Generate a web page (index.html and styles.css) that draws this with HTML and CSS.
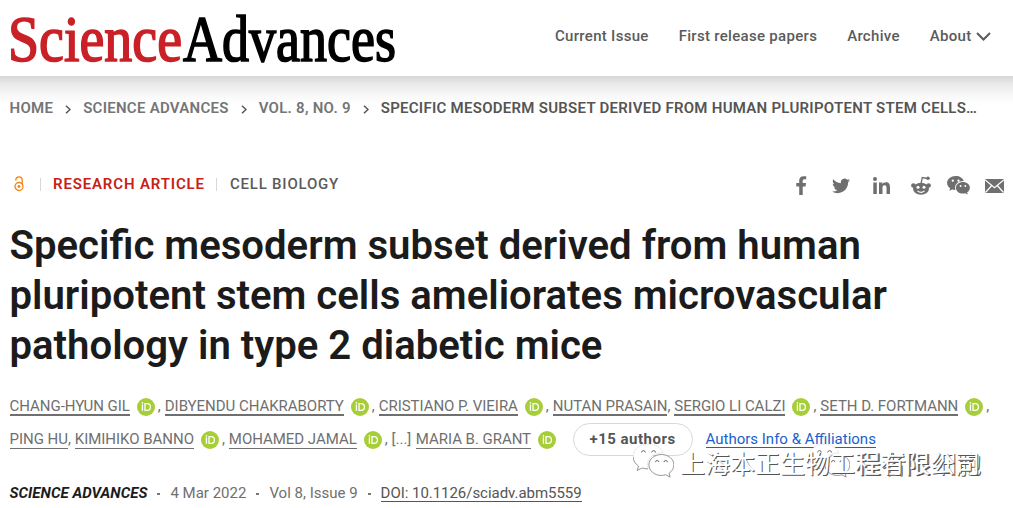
FILE: index.html
```html
<!DOCTYPE html>
<html lang="en">
<head>
<meta charset="utf-8">
<title>Science Advances</title>
<link rel="stylesheet" href="styles.css">
</head>
<body>
<svg class="defs" width="0" height="0">
  <symbol id="orcid" viewBox="0 0 18 18"><circle cx="9" cy="9" r="9" fill="#a6ce39"/><circle cx="5.400" cy="4.900" r=".8" fill="#fff"/><path d="M5.400 6.600v6.200M8 5.700h2.200a3.200 3.300 0 0 1 0 6.600H8z" fill="none" stroke="#fff" stroke-width="1.300"/></symbol>
  <symbol id="wechat" viewBox="0 0 24 20"><path fill-rule="evenodd" d="M9 0C4 0 0 3.300 0 7.400c0 2.300 1.200 4.200 3.200 5.600L2.400 15.600l3-1.500c1 .3 2.200.6 3.400.5A6.800 6.800 0 0 1 8.400 12.300c0-4 3.700-7 8.300-7h.8C16.700 2.200 13.200 0 9 0zM6 3.700a1.200 1.200 0 1 1 0 2.400 1.200 1.200 0 0 1 0-2.400zm6 0a1.200 1.200 0 1 1 0 2.400 1.200 1.200 0 0 1 0-2.400zM16.700 6.200c-4.200 0-7.400 2.700-7.400 6.100s3.200 6.200 7.400 6.200c.9 0 1.800-.2 2.600-.4l2.500 1.400-.7-2.300c1.800-1.200 2.900-2.900 2.900-4.900 0-3.400-3.300-6.100-7.300-6.100zm-2.500 3.300a1 1 0 1 1 0 2 1 1 0 0 1 0-2zm5 0a1 1 0 1 1 0 2 1 1 0 0 1 0-2z"/></symbol>
  <symbol id="wechat-outline" viewBox="0 0 24 20"><path d="M9 0C4 0 0 3.300 0 7.400c0 2.300 1.200 4.200 3.200 5.600L2.400 15.600l3-1.500c1 .3 2.200.6 3.400.5A6.800 6.800 0 0 1 8.400 12.300c0-4 3.700-7 8.300-7h.8C16.700 2.200 13.200 0 9 0z" fill="#fff" stroke="#bbb" stroke-width=".3" stroke-dasharray=".8 .5"/><path d="M0 7.400c0 2.300 1.200 4.200 3.200 5.600L2.400 15.600l3-1.500c1 .3 2.200.6 3.400.5" fill="none" stroke="#777" stroke-width=".4"/><path d="M16.700 6.200c-4.200 0-7.400 2.700-7.400 6.100s3.200 6.200 7.400 6.200c.9 0 1.800-.2 2.600-.4l2.500 1.400-.7-2.300c1.800-1.200 2.900-2.900 2.900-4.900 0-3.400-3.300-6.100-7.300-6.100z" fill="#fff" stroke="#666" stroke-width=".4"/><path d="M5 5a1.100 1.100 0 0 1 2.200 0M11 5a1.100 1.100 0 0 1 2.200 0M13.200 10.700a1 1 0 0 1 2 0M18.200 10.700a1 1 0 0 1 2 0" fill="none" stroke="#555" stroke-width=".5"/></symbol>
</svg>
<header class="header">
  <svg class="logo" width="400" height="60" viewBox="0 0 400 60" role="img" aria-label="Science Advances">
    <text class="logo-science" x="8" y="52.500" textLength="174" lengthAdjust="spacingAndGlyphs">Science</text>
    <text class="logo-advances" x="183" y="52.500" textLength="213" lengthAdjust="spacingAndGlyphs">Advances</text>
  </svg>
  <nav class="nav">
    <a>Current Issue</a><a>First release papers</a><a>Archive</a>
    <a>About<svg class="caret" width="15" height="9" viewBox="0 0 15 9"><path d="M1 1l6.500 6.500L14 1"/></svg></a>
  </nav>
</header>
<div class="crumbs">
  <a>HOME</a><svg class="sep" width="6" height="9" viewBox="0 0 6 9"><path d="M1 .7l4 3.800-4 3.800"/></svg>
  <a>SCIENCE ADVANCES</a><svg class="sep" width="6" height="9" viewBox="0 0 6 9"><path d="M1 .7l4 3.800-4 3.800"/></svg>
  <a>VOL. 8, NO. 9</a><svg class="sep" width="6" height="9" viewBox="0 0 6 9"><path d="M1 .7l4 3.800-4 3.800"/></svg>
  <span class="here">SPECIFIC MESODERM SUBSET DERIVED FROM HUMAN PLURIPOTENT STEM CELLS…</span>
</div>
<main class="article">
  <div class="meta">
    <div class="kinds">
      <svg class="oa" width="10" height="16" viewBox="0 0 10 16"><circle cx="5" cy="10.500" r="4"/><path d="M1.800 4.500V4a3.200 3.200 0 0 1 6.400 0v4.500"/><circle class="oa-dot" cx="5" cy="10.500" r="1.400"/></svg>
      <i class="bar"></i><span class="type">RESEARCH ARTICLE</span><i class="bar"></i><span class="topic">CELL BIOLOGY</span>
    </div>
    <div class="share">
      <svg width="11" height="19" viewBox="0 0 11 19"><path d="M3.200 19v-8.600H.3V7.100h2.900V4.600C3.200 1.700 5 .2 7.600.2c1.200 0 2.300.1 2.600.1v3H8.400c-1.400 0-1.700.7-1.700 1.700v2.100H10l-.4 3.300H6.700V19z"/></svg>
      <svg width="18" height="16" viewBox="0 0 24 20"><path d="M24 2.400c-.9.400-1.800.7-2.800.8 1-.6 1.800-1.600 2.200-2.700-1 .6-2 1-3.100 1.200A4.900 4.900 0 0 0 11.900 6.200C7.800 6 4.200 4 1.700 1 .4 3.200 1 6 3.200 7.500c-.8 0-1.600-.2-2.200-.6 0 2.300 1.600 4.400 3.900 4.900-.7.200-1.500.2-2.200.1a4.900 4.900 0 0 0 4.600 3.400A9.900 9.900 0 0 1 0 17.300 14 14 0 0 0 7.500 19.500c9.100 0 14.300-7.700 14-14.600 1-.7 1.800-1.600 2.500-2.500z"/></svg>
      <svg width="17" height="17" viewBox="0 0 17 17"><circle cx="2" cy="2" r="2"/><path d="M.3 5.600h3.500V17H.3zM6 5.600h3.400v1.600c.7-1.200 1.900-1.900 3.500-1.900 3.200 0 4.100 2 4.100 5V17h-3.500v-6c0-1.500-.3-2.700-1.900-2.700s-2.100 1.100-2.100 2.600V17H6z"/></svg>
      <svg width="20" height="19" viewBox="0 0 20 19"><path d="M10 8l1.300-6.500 5 1" fill="none" stroke="#6f6f6f" stroke-width="1.300"/><circle cx="17" cy="2.300" r="1.800"/><circle cx="2.400" cy="9.500" r="2.300"/><circle cx="17.600" cy="9.500" r="2.300"/><ellipse cx="10" cy="12.700" rx="8" ry="6"/><circle cx="7" cy="11.300" r="1.500" fill="#fff"/><circle cx="13" cy="11.300" r="1.500" fill="#fff"/><path d="M6.500 15c2 1.500 5 1.500 7 0" fill="none" stroke="#fff" stroke-width="1.100"/></svg>
      <svg width="23" height="19"><use href="#wechat"/></svg>
      <svg width="19" height="14" viewBox="0 0 19 14"><path d="M0 0h19v14H0z"/><path d="M0 .8l9.500 8 9.500-8M.5 13.500l6.200-7M18.500 13.500l-6.200-7" fill="none" stroke="#fff" stroke-width="1.200"/></svg>
    </div>
  </div>
  <h1 class="title">Specific mesoderm subset derived from human<br>pluripotent stem cells ameliorates microvascular<br>pathology in type 2 diabetic mice</h1>
  <div class="authors first">
    <a>CHANG-HYUN GIL</a><svg class="orcid"><use href="#orcid"/></svg><span class="comma">,</span><a>DIBYENDU CHAKRABORTY</a><svg class="orcid"><use href="#orcid"/></svg><span class="comma">,</span><a>CRISTIANO P. VIEIRA</a><svg class="orcid"><use href="#orcid"/></svg><span class="comma">,</span><a>NUTAN PRASAIN</a><span class="tight">,</span><a>SERGIO LI CALZI</a><svg class="orcid"><use href="#orcid"/></svg><span class="comma">,</span><a>SETH D. FORTMANN</a><svg class="orcid"><use href="#orcid"/></svg><span class="comma">,</span>
  </div>
  <div class="authors second">
    <a>PING HU</a><span class="tight">,</span><a>KIMIHIKO BANNO</a><svg class="orcid"><use href="#orcid"/></svg><span class="comma">,</span><a>MOHAMED JAMAL</a><svg class="orcid"><use href="#orcid"/></svg><span class="comma">,</span><span class="more">[...]</span><a>MARIA B. GRANT</a><svg class="orcid"><use href="#orcid"/></svg>
    <span class="pill">+15 authors</span><span class="info">Authors Info &amp; Affiliations</span>
  </div>
  <div class="issue">
    <b>SCIENCE ADVANCES</b><i class="dot"></i><span>4 Mar 2022</span><i class="dot"></i><span>Vol 8, Issue 9</span><i class="dot"></i><span class="doi">DOI: 10.1126/sciadv.abm5559</span>
  </div>
</main>
<div class="watermark under"><svg class="wm-icon"><use href="#wechat-outline"/></svg><span>程者限细胞</span></div>
<div class="watermark over"><svg class="wm-icon"><use href="#wechat-outline"/></svg><span>上海本正生物工程有限公司</span></div>
</body>
</html>
```
FILE: styles.css
```css
* { box-sizing: border-box; }
body { margin: 0; width: 1013px; height: 508px; overflow: hidden; position: relative; background: #fff; color: #6f6f6f; font-family: Roboto, "Liberation Sans", sans-serif; white-space: nowrap; }
.defs { position: absolute; }
.header { height: 76px; padding-top: 8px; display: flex; background: #fff; }
.logo { flex: none; overflow: visible; }
.logo text { font-family: "Liberation Serif", serif; font-size: 65px; stroke-width: 1.7px; }
.logo-science { fill: #c92127; stroke: #c92127; }
.logo-advances { fill: #000; stroke: #000; }
.nav { display: flex; gap: 30px; margin-left: 155px; padding-top: 18px; font-size: 15px; line-height: 20px; font-weight: 500; letter-spacing: .3px; color: #5b5b5b; }
.caret { margin-left: 5px; fill: none; stroke: #5b5b5b; stroke-width: 2; }
.crumbs { height: 62px; padding: 22px 0 0 9.5px; display: flex; font-size: 15px; line-height: 20px; font-weight: 600; letter-spacing: .27px; color: #757575; background: linear-gradient(#d7d7d7, #e9e9e9 8px, #f8f8f8 19px, #fff 29px); }
.sep { margin: 7px 11.8px 0 12.2px; fill: none; stroke: #555; stroke-width: 1.5; flex: none; }
.here { color: #555; }
.article { padding-left: 9.5px; }
.meta { height: 83px; padding-top: 34px; display: flex; justify-content: space-between; }
.kinds { display: flex; height: 24px; align-items: center; font-size: 15px; font-weight: 600; letter-spacing: .85px; }
.oa { margin-left: 4px; fill: none; stroke: #f68212; stroke-width: 1.3; }
.oa .oa-dot { fill: #f68212; stroke: none; }
.bar { width: 1px; height: 13px; margin: 0 12.5px 0 16px; background: #d8d8d8; }
.type { color: #ca2015; }
.type + .bar { margin-left: 11.5px; }
.topic { color: #5b5b5b; font-weight: 500; letter-spacing: .8px; }
.share { display: grid; grid-template-columns: 40px 40px 40px 40px 34px 38px; width: 232px; height: 27px; align-items: center; justify-items: center; fill: #6f6f6f; }
.title { margin: 0; font-size: 40.12px; line-height: 50px; font-weight: 600; color: #1b1b1b; }
.authors { display: flex; align-items: center; height: 33px; font-size: 15px; line-height: 17px; letter-spacing: -.03px; }
.authors.first { margin-top: 19px; }
.authors a { border-bottom: 2px solid #6f6f6f; height: 18px; }
.authors.second a { border-bottom-width: 1px; }
.orcid { width: 18px; height: 18px; margin-left: 7px; }
.comma { margin: 0 4px 0 3px; }
.tight { margin-right: 4px; }
.more { margin-right: 4.5px; }
.pill { width: 120px; height: 33px; margin-left: 16.5px; border: 1px solid #d8d8d8; border-radius: 17px; text-align: center; line-height: 31px; font-weight: 700; letter-spacing: .5px; color: #555; }
.info { margin-left: 13px; border-bottom: 1px solid #1a5fcd; height: 17px; color: #1a5fcd; letter-spacing: 0; }
.issue { display: flex; align-items: center; margin-top: 29px; font-size: 15px; line-height: 17px; }
.issue b { color: #1b1b1b; font-style: italic; font-weight: 700; letter-spacing: .04px; }
.dot { width: 3px; height: 2px; margin: 1px 10px 0; background: #777; }
.doi { color: #555; border-bottom: 1px solid #555; height: 17px; letter-spacing: -.04px; }
.watermark { position: absolute; top: 444px; display: flex; color: #fff; font: 25px/36px "Noto Sans CJK SC", sans-serif; text-shadow: 1px 1px 0 #555; }
.watermark.under { left: 809px; }
.watermark.over { left: 633px; }
.wm-icon { width: 41px; height: 34px; margin-right: 6px; overflow: visible; }
```
